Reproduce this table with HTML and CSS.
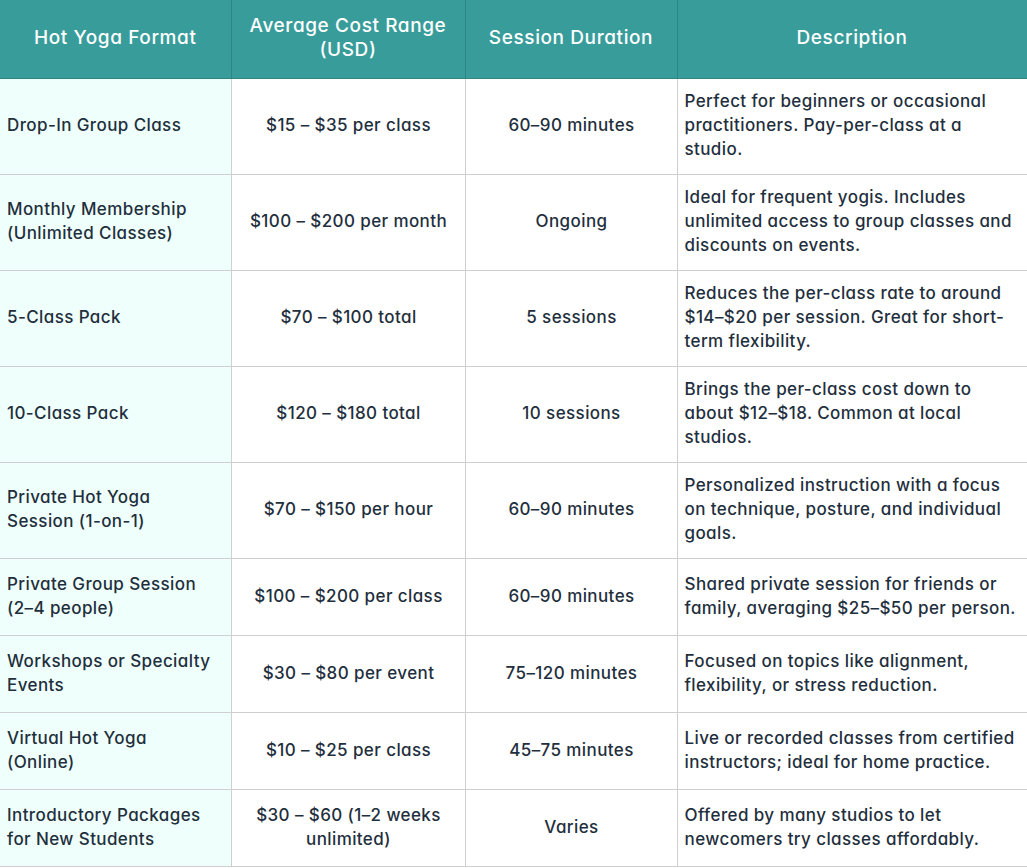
FILE: index.html
```html
<!DOCTYPE html>
<html lang="en">
<head>
<meta charset="utf-8">
<title>Hot Yoga Pricing</title>
<link rel="stylesheet" href="styles.css">
</head>
<body>
<table class="pricing">
  <colgroup>
    <col class="c1"><col class="c2"><col class="c3"><col class="c4">
  </colgroup>
  <thead>
    <tr>
      <th>Hot Yoga Format</th>
      <th>Average Cost Range<br>(USD)</th>
      <th>Session Duration</th>
      <th>Description</th>
    </tr>
  </thead>
  <tbody>
    <tr>
      <td class="fmt">Drop-In Group Class</td>
      <td class="mid">$15 – $35 per class</td>
      <td class="mid">60–90 minutes</td>
      <td class="desc">Perfect for beginners or occasional practitioners. Pay-per-class at a studio.</td>
    </tr>
    <tr>
      <td class="fmt">Monthly Membership (Unlimited Classes)</td>
      <td class="mid">$100 – $200 per month</td>
      <td class="mid">Ongoing</td>
      <td class="desc">Ideal for frequent yogis. Includes unlimited access to group classes and discounts on events.</td>
    </tr>
    <tr>
      <td class="fmt">5-Class Pack</td>
      <td class="mid">$70 – $100 total</td>
      <td class="mid">5 sessions</td>
      <td class="desc">Reduces the per-class rate to around $14–$20 per session. Great for short-term flexibility.</td>
    </tr>
    <tr>
      <td class="fmt">10-Class Pack</td>
      <td class="mid">$120 – $180 total</td>
      <td class="mid">10 sessions</td>
      <td class="desc">Brings the per-class cost down to about $12–$18. Common at local studios.</td>
    </tr>
    <tr>
      <td class="fmt">Private Hot Yoga Session (1-on-1)</td>
      <td class="mid">$70 – $150 per hour</td>
      <td class="mid">60–90 minutes</td>
      <td class="desc">Personalized instruction with a focus on technique, posture, and individual goals.</td>
    </tr>
    <tr>
      <td class="fmt">Private Group Session (2–4 people)</td>
      <td class="mid">$100 – $200 per class</td>
      <td class="mid">60–90 minutes</td>
      <td class="desc">Shared private session for friends or family, averaging $25–$50 per person.</td>
    </tr>
    <tr>
      <td class="fmt">Workshops or Specialty Events</td>
      <td class="mid">$30 – $80 per event</td>
      <td class="mid">75–120 minutes</td>
      <td class="desc">Focused on topics like alignment, flexibility, or stress reduction.</td>
    </tr>
    <tr>
      <td class="fmt">Virtual Hot Yoga (Online)</td>
      <td class="mid">$10 – $25 per class</td>
      <td class="mid">45–75 minutes</td>
      <td class="desc">Live or recorded classes from certified instructors; ideal for home practice.</td>
    </tr>
    <tr>
      <td class="fmt">Introductory Packages for New Students</td>
      <td class="mid">$30 – $60 (1–2 weeks unlimited)</td>
      <td class="mid">Varies</td>
      <td class="desc">Offered by many studios to let newcomers try classes affordably.</td>
    </tr>
  </tbody>
</table>
</body>
</html>
```
FILE: styles.css
```css
html, body {
  margin: 0;
  padding: 0;
  background: #ffffff;
}

body {
  font-family: Inter, "Noto Sans", "Liberation Sans", sans-serif;
  font-feature-settings: "cv11";
  font-size: 17px;
  font-weight: 500;
  letter-spacing: 0.4px;
  line-height: 24px;
  color: #1f2f3d;
}

.pricing {
  width: 1027px;
  border-collapse: collapse;
  table-layout: fixed;
}

.c1 { width: 231px; }
.c2 { width: 234px; }
.c3 { width: 212px; }
.c4 { width: 350px; }

.pricing th {
  background: #389c9b;
  color: #ffffff;
  font-weight: 500;
  font-size: 19px;
  letter-spacing: 0.6px;
  text-align: center;
  padding: 14px 8px 16px;
  border: 1px solid #2e8584;
  border-top: none;
}

.pricing th:first-child { border-left: none; }

.pricing tbody tr {
  height: 77px;
}

.pricing td {
  padding: 10px 6px 13px 7px;
  border: 1px solid #cfcfcf;
  vertical-align: middle;
}

.pricing td.fmt {
  background: #effffb;
  border-left: none;
  padding-right: 16px;
}

.pricing td.mid {
  text-align: center;
}
```
